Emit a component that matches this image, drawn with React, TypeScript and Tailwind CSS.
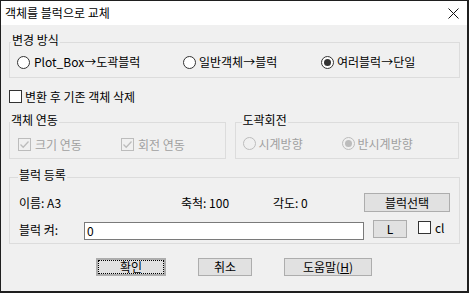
import React from "react";

const Radio = ({ checked, disabled }: { checked?: boolean; disabled?: boolean }) => (
  <span
    className={`flex h-[13px] w-[13px] shrink-0 items-center justify-center rounded-full border ${
      disabled ? "border-[#bcbcbc] bg-[#f0f0f0]" : "border-[#333333] bg-white"
    }`}
  >
    {checked && (
      <span className={`h-[7px] w-[7px] rounded-full ${disabled ? "bg-[#bcbcbc]" : "bg-[#333333]"}`} />
    )}
  </span>
);

const Check = ({ checked, disabled }: { checked?: boolean; disabled?: boolean }) => (
  <span
    className={`flex h-[13px] w-[13px] shrink-0 items-center justify-center border ${
      disabled ? "border-[#bcbcbc] bg-[#f0f0f0]" : "border-[#333333] bg-white"
    }`}
  >
    {checked && (
      <svg width="11" height="11" viewBox="0 0 11 11">
        <path d="M1.5 5.5 L4.2 8.2 L9.5 2.5" fill="none" stroke={disabled ? "#bcbcbc" : "#333"} strokeWidth="1.3" />
      </svg>
    )}
  </span>
);

const Btn = ({ children, className = "" }: { children: React.ReactNode; className?: string }) => (
  <button
    className={`flex h-[18px] items-center justify-center border border-[#adadad] bg-[#e1e1e1] leading-[12px] text-black ${className}`}
  >
    {children}
  </button>
);

export default function App() {
  return (
    <div className="h-[293px] w-[469px] bg-[#1f1f1f] pl-px pt-px font-['Noto_Sans_CJK_KR',sans-serif] text-[12px] leading-[12px] text-black">
      <div className="flex h-[290px] w-[466px] flex-col bg-[#f0f0f0]">
        {/* title bar */}
        <div className="flex h-[24px] items-center justify-between bg-white pl-[4px] pr-[8px]">
          <span>객체를 블럭으로 교체</span>
          <svg width="11" height="11" viewBox="0 0 11 11">
            <path d="M0.5 0.5 L10.5 10.5 M10.5 0.5 L0.5 10.5" stroke="#111" strokeWidth="1" />
          </svg>
        </div>

        <div className="flex flex-col px-[8px]">
          {/* 변경 방식 */}
          <fieldset className="mt-[9px] h-[44px] w-[451px] border border-[#dcdcdc]">
            <legend className="ml-[1px] px-[1px] pb-[4px] leading-[12px]">변경 방식</legend>
            <div className="mt-[4px] flex h-[16px] items-center pl-[7px]">
              <div className="flex w-[166px] items-center gap-[4px]">
                <Radio />
                <span>Plot_Box→도곽블럭</span>
              </div>
              <div className="flex w-[138px] items-center gap-[3px]">
                <Radio />
                <span>일반객체→블럭</span>
              </div>
              <div className="flex items-center gap-[3px]">
                <Radio checked />
                <span>여러블럭→단일</span>
              </div>
            </div>
          </fieldset>

          <div className="mt-[12px] flex h-[13px] items-center gap-[3px]">
            <Check />
            <span>변환 후 기존 객체 삭제</span>
          </div>

          <div className="mt-[11px] flex gap-[9px]">
            <fieldset className="h-[45px] w-[217px] border border-[#dcdcdc]">
              <legend className="ml-0 px-[1px] pb-[4px] leading-[12px]">객체 연동</legend>
              <div className="mt-[8px] flex h-[13px] items-center pl-[8px] text-[#a0a0a0]">
                <div className="flex w-[103px] items-center gap-[4px]">
                  <Check checked disabled />
                  <span>크기 연동</span>
                </div>
                <div className="flex items-center gap-[4px]">
                  <Check checked disabled />
                  <span>회전 연동</span>
                </div>
              </div>
            </fieldset>
            <fieldset className="h-[45px] w-[225px] border border-[#dcdcdc]">
              <legend className="ml-[6px] px-[1px] pb-[4px] leading-[12px]">도곽회전</legend>
              <div className="mt-[7px] flex h-[13px] items-center pl-[7px] text-[#a0a0a0]">
                <div className="flex w-[99px] items-center gap-[3px]">
                  <Radio disabled />
                  <span>시계방향</span>
                </div>
                <div className="flex items-center gap-[3px]">
                  <Radio checked disabled />
                  <span>반시계방향</span>
                </div>
              </div>
            </fieldset>
          </div>

          {/* 블럭 등록 */}
          <fieldset className="mt-[10px] h-[75px] w-[451px] border border-[#dcdcdc]">
            <legend className="ml-[8px] px-[1px] pb-[4px] leading-[12px]">블럭 등록</legend>
            <div className="mt-[8px] flex h-[19px] items-center pl-[9px]">
              <span className="w-[162px]">이름: A3</span>
              <span className="w-[92px]">축척: 100</span>
              <span className="w-[91px]">각도: 0</span>
              <Btn className="h-[19px] w-[86px]">블럭선택</Btn>
            </div>
            <div className="mt-[8px] flex items-start pl-[9px]">
              <span className="mt-[4px] w-[65px]">블럭 켜:</span>
              <div className="mt-[2px] flex h-[18px] w-[280px] items-center border border-[#7a7a7a] bg-white pl-[2px]">
                0
              </div>
              <Btn className="ml-[9px] w-[34px]">L</Btn>
              <div className="ml-[11px] mt-[1px] flex items-center gap-[4px]">
                <Check />
                <span>cl</span>
              </div>
            </div>
          </fieldset>

          <div className="mt-[14px] flex justify-center gap-[32px]">
            <Btn className="w-[70px] border-2 border-[#0078d7] outline-1 -outline-offset-3 outline-black outline-dotted">
              확인
            </Btn>
            <Btn className="w-[54px]">취소</Btn>
            <Btn className="w-[88px]">
              도움말(<span className="underline">H</span>)
            </Btn>
          </div>
        </div>
      </div>
    </div>
  );
}
